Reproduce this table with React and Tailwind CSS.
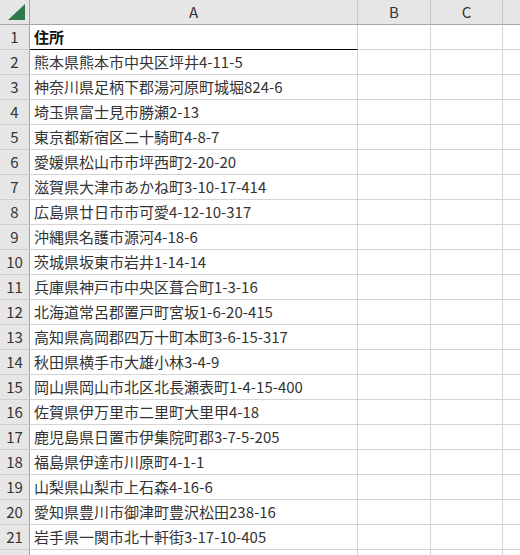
const addresses = [
  "熊本県熊本市中央区坪井4-11-5",
  "神奈川県足柄下郡湯河原町城堀824-6",
  "埼玉県富士見市勝瀬2-13",
  "東京都新宿区二十騎町4-8-7",
  "愛媛県松山市市坪西町2-20-20",
  "滋賀県大津市あかね町3-10-17-414",
  "広島県廿日市市可愛4-12-10-317",
  "沖縄県名護市源河4-18-6",
  "茨城県坂東市岩井1-14-14",
  "兵庫県神戸市中央区葺合町1-3-16",
  "北海道常呂郡置戸町宮坂1-6-20-415",
  "高知県高岡郡四万十町本町3-6-15-317",
  "秋田県横手市大雄小林3-4-9",
  "岡山県岡山市北区北長瀬表町1-4-15-400",
  "佐賀県伊万里市二里町大里甲4-18",
  "鹿児島県日置市伊集院町郡3-7-5-205",
  "福島県伊達市川原町4-1-1",
  "山梨県山梨市上石森4-16-6",
  "愛知県豊川市御津町豊沢松田238-16",
  "岩手県一関市北十軒街3-17-10-405",
];

const font = "font-['Noto_Sans_CJK_JP','Noto_Sans',sans-serif]";

function HeaderRow() {
  return (
    <div className="flex h-[25px] border-b border-[#a6a6a6] bg-[#e6e6e6] text-[15px] text-[#333]">
      <div className="flex w-[30px] shrink-0 items-end justify-end border-r border-[#a6a6a6] pb-[4px] pr-[4px]">
        <svg width="17" height="16" viewBox="0 0 17 16">
          <polygon points="17,0 0,16 17,16" fill="#2e7a4c" />
        </svg>
      </div>
      <div className="flex w-[328px] shrink-0 items-center justify-center border-r border-[#c8c8c8]">A</div>
      <div className="flex w-[73px] shrink-0 items-center justify-center border-r border-[#c8c8c8]">B</div>
      <div className="flex w-[72px] shrink-0 items-center justify-center border-r border-[#c8c8c8]">C</div>
      <div className="flex-1" />
    </div>
  );
}

function Row({ num, text, first }) {
  return (
    <div className="flex h-[25px] text-[15px]">
      <div className="flex w-[30px] shrink-0 items-center justify-center border-b border-r border-b-[#d0d0d0] border-r-[#a6a6a6] bg-[#e6e6e6] text-[#333]">
        {num}
      </div>
      <div
        className={
          first
            ? "flex w-[328px] shrink-0 items-center border-b border-r border-b-black border-r-[#d4d4d4] pl-[4px] font-bold text-[#111]"
            : "flex w-[328px] shrink-0 items-center border-b border-r border-[#d4d4d4] pl-[4px] text-[#333]"
        }
      >
        {text}
      </div>
      <div className="w-[73px] shrink-0 border-b border-r border-[#d4d4d4]" />
      <div className="w-[72px] shrink-0 border-b border-r border-[#d4d4d4]" />
      <div className="flex-1 border-b border-[#d4d4d4]" />
    </div>
  );
}

export default function App() {
  return (
    <div className={`h-[555px] w-[520px] overflow-hidden bg-white ${font}`}>
      <HeaderRow />
      <Row num={1} text="住所" first />
      {addresses.map((addr, i) => (
        <Row key={i} num={i + 2} text={addr} />
      ))}
      {/* row 22, only its top edge shows */}
      <Row num="" text="" />
    </div>
  );
}
